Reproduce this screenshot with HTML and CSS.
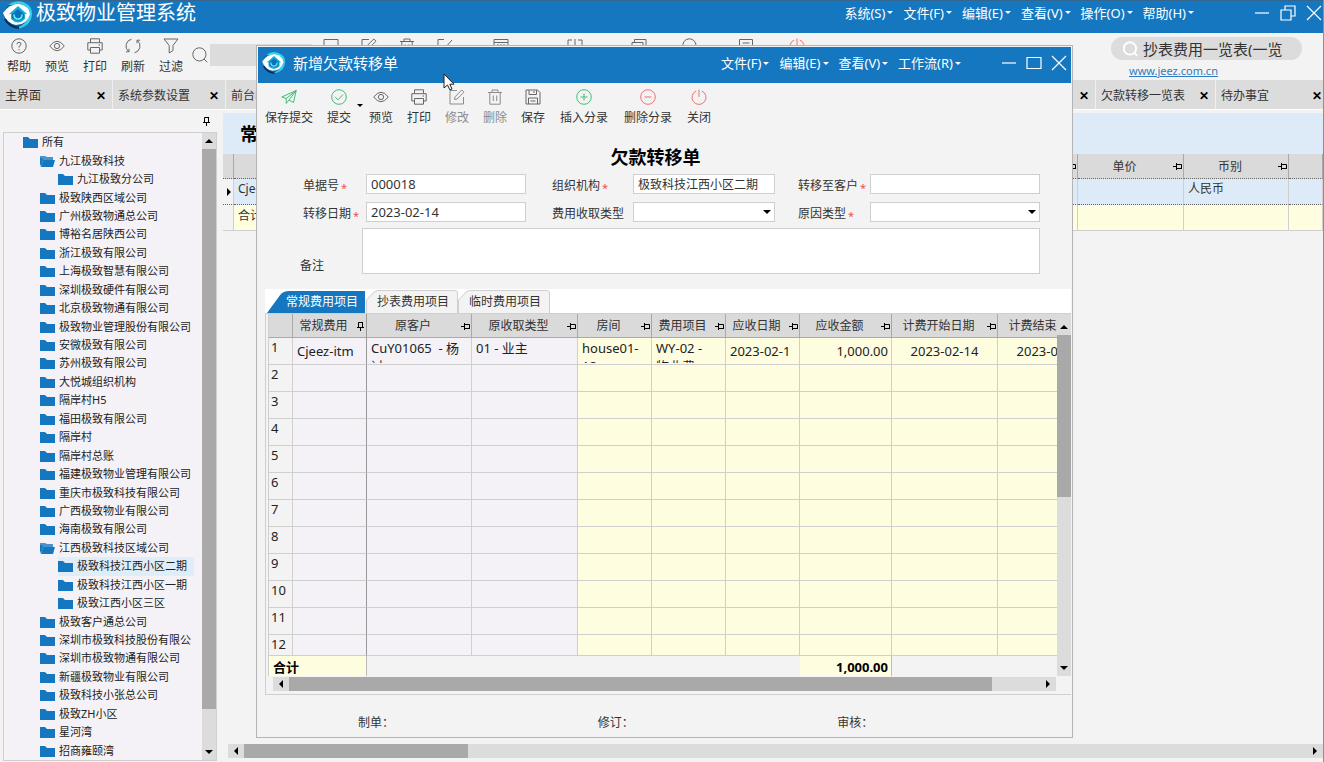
FILE: index.html
```html
<!DOCTYPE html>
<html lang="zh-CN">
<head>
    <meta charset="UTF-8">
    <meta name="viewport" content="width=device-width, initial-scale=1.0">
    <title>极致物业管理系统</title>
    <link rel="stylesheet" href="styles.css">
</head>
<body>
    <!-- Icon set -->
    <svg class="icon-defs" aria-hidden="true">
        <symbol id="logo" viewBox="0 0 30 28">
            <ellipse cx="15" cy="14" rx="14" ry="13" fill="#0b5da6"/>
            <path d="M5 4 A14 12 0 0 1 29 14 A14 14 0 0 1 13 27 Q25 23 26 13 Q20 2 5 4Z" fill="#35cdea"/>
            <path d="M0 12 Q6 3 16 3 Q26 5 27 13 Q24 24 13 24 Q3 22 0 12Z" fill="#fff"/>
            <path d="M6 13 L15 5 L24 13 H22 V18 Q15 25 8 18 V13Z" fill="#18acdc"/>
            <path d="M9 13 L15 8 L21 13 V17 Q15 22 9 17Z" fill="#0a74b8"/>
            <path d="M11 13.500 Q11 18 15 18 Q19 18 19 13.500" fill="none" stroke="#6ff2f5" stroke-width="1.500"/>
            <path d="M2 18 Q6 26 16 27" fill="none" stroke="#062f5e" stroke-width="2"/>
        </symbol>
        <symbol id="help" viewBox="0 0 16 16">
            <circle cx="8" cy="8" r="7.2"/>
            <path d="M6 6.3 Q6 4.3 8 4.3 Q10 4.3 10 6.2 Q10 7.3 8 8.4 V9.6 M8 11 V12.2"/>
        </symbol>
        <symbol id="eye" viewBox="0 0 16 16">
            <path d="M.7 8 Q8 -1.5 15.3 8 Q8 17.5 .7 8Z"/>
            <circle cx="8" cy="8" r="2.6"/>
        </symbol>
        <symbol id="print" viewBox="0 0 16 16">
            <path d="M3.5 4.5 V.8 H12.5 V4.5 M3.5 12 H.8 V4.7 H15.2 V12 H12.5 M3.5 9.5 H12.5 V15.2 H3.5Z M11.5 7 H13"/>
        </symbol>
        <symbol id="refresh" viewBox="0 0 16 16">
            <path d="M6.5 1.2 A7 7 0 0 0 3.5 13.4 M1 13.8 H4 V10.8 M9.5 14.8 A7 7 0 0 0 12.5 2.6 M15 2.2 H12 V5.2"/>
        </symbol>
        <symbol id="filter" viewBox="0 0 16 16">
            <path d="M1 1 H15 L10 7.5 V12.5 L6.2 15 V7.5Z"/>
        </symbol>
        <symbol id="search" viewBox="0 0 16 16">
            <circle cx="7.4" cy="7.4" r="6.6"/>
            <path d="M12 12 L15.3 15.3"/>
        </symbol>
        <symbol id="doc" viewBox="0 0 16 16">
            <path d="M1 15 V1.5 H15 V15Z"/>
        </symbol>
        <symbol id="edit" viewBox="0 0 16 16">
            <path d="M8 1.5 H1 V15 H14.5 V8 M5.5 10.5 L6 7.8 L12.8 1 L15 3.2 L8.2 10Z"/>
        </symbol>
        <symbol id="trash" viewBox="0 0 16 16">
            <path d="M1 3.5 H15 M5 3.5 V1 H11 V3.5 M2.8 3.5 V15.2 H13.2 V3.5 M6.3 6.5 V12 M9.7 6.5 V12"/>
        </symbol>
        <symbol id="check-doc" viewBox="0 0 16 16">
            <path d="M7 1.5 H1 V15 H14 V9 M5 7 L8 10 L15 2"/>
        </symbol>
        <symbol id="calendar" viewBox="0 0 16 16">
            <path d="M1 15 V1.5 H15 V15Z M1 4.5 H15 M4 7 H6 M7 7 H9 M10 7 H12"/>
        </symbol>
        <symbol id="download" viewBox="0 0 16 16">
            <path d="M5 2 H1 V15 H15 V2 H11 M8 1 V10 M5 7 L8 10 L11 7"/>
        </symbol>
        <symbol id="copy" viewBox="0 0 16 16">
            <path d="M1 4.5 H12 V15 H1Z M3.5 4.5 V1.5 H15 V12 H12"/>
        </symbol>
        <symbol id="list" viewBox="0 0 16 16">
            <path d="M1.5 1.5 H14.5 V15 H1.5Z M4.5 5 H11.5 M4.5 8.5 H11.5"/>
        </symbol>
        <symbol id="power" viewBox="0 0 16 16">
            <path d="M5.2 2 A7 7 0 1 0 10.8 2 M8 .5 V8"/>
        </symbol>
        <symbol id="send" viewBox="0 0 16 16">
            <path d="M.8 8 L15.2 1.5 L12.5 13.5 L8 11 L5.2 14.5 V9.5Z M5.2 9.5 L15.2 1.5 L8 11"/>
        </symbol>
        <symbol id="ok" viewBox="0 0 16 16">
            <circle cx="8" cy="8" r="7.3"/>
            <path d="M4.2 8 L7 10.8 L12 5.6"/>
        </symbol>
        <symbol id="save" viewBox="0 0 16 16">
            <path d="M1 1 H12.5 L15 3.5 V15 H1Z M4 1 V5.5 H11.5 V1 M9 2 V4 M3.5 15 V9 H12.5 V15 M5.5 12 H10.5"/>
        </symbol>
        <symbol id="plus" viewBox="0 0 16 16">
            <circle cx="8" cy="8" r="7.3"/>
            <path d="M4.5 8 H11.5 M8 4.5 V11.5"/>
        </symbol>
        <symbol id="minus" viewBox="0 0 16 16">
            <circle cx="8" cy="8" r="7.3"/>
            <path d="M4.5 8 H11.5"/>
        </symbol>
        <symbol id="win-min" viewBox="0 0 16 16"><path d="M1 8 H15"/></symbol>
        <symbol id="win-max" viewBox="0 0 16 16"><path d="M1 2.5 H15 V13.5 H1Z"/></symbol>
        <symbol id="win-restore" viewBox="0 0 16 16"><path d="M1 5 H11 V15 H1Z M5 5 V1 H15 V11 H11"/></symbol>
        <symbol id="win-close" viewBox="0 0 16 16"><path d="M1 1 L15 15 M15 1 L1 15"/></symbol>
        <symbol id="pin" viewBox="0 0 9 9">
            <path d="M0 4.500 H3.500 M3.500 1 V8 M3.500 2.500 H8.500 V6.500 M3.500 6.500 H9"/>
        </symbol>
        <symbol id="pin-down" viewBox="0 0 9 9">
            <path d="M2.500 5.500 V.500 H6.500 M6.500 0 V5.500 M1 5.500 H8 M4.500 5.500 V9"/>
        </symbol>
        <symbol id="folder" viewBox="0 0 15 12">
            <path d="M0 1 H5 L7 3 H15 V12 H0Z" fill="#1577c0"/>
        </symbol>
        <symbol id="folder-open" viewBox="0 0 15 12">
            <path d="M0 1 H5 L7 2 H13 V5 H0Z" fill="#4a93cb"/>
            <path d="M3 5 H15 L13 12 H1Z" fill="#1577c0"/>
            <path d="M0 3 H2 L3 5 L1 12 L0 9Z" fill="#1577c0"/>
        </symbol>
    </svg>

    <header class="titlebar">
        <svg class="logo"><use href="#logo"/></svg>
        <h1>极致物业管理系统</h1>
        <nav class="menu">
            <button>系统(S)</button>
            <button>文件(F)</button>
            <button>编辑(E)</button>
            <button>查看(V)</button>
            <button>操作(O)</button>
            <button>帮助(H)</button>
        </nav>
        <div class="win-buttons">
            <button aria-label="最小化"><svg><use href="#win-min"/></svg></button>
            <button aria-label="还原"><svg><use href="#win-restore"/></svg></button>
            <button aria-label="关闭"><svg><use href="#win-close"/></svg></button>
        </div>
    </header>

    <div class="toolbar">
        <button class="tool"><svg><use href="#help"/></svg>帮助</button>
        <button class="tool"><svg><use href="#eye"/></svg>预览</button>
        <button class="tool"><svg><use href="#print"/></svg>打印</button>
        <button class="tool"><svg><use href="#refresh"/></svg>刷新</button>
        <button class="tool"><svg><use href="#filter"/></svg>过滤</button>
        <label class="quick-search">
            <svg><use href="#search"/></svg>
            <input type="text" aria-label="搜索">
        </label>
        <button class="tool" aria-label="新增"><svg><use href="#doc"/></svg></button>
        <button class="tool" aria-label="修改"><svg><use href="#edit"/></svg></button>
        <button class="tool" aria-label="删除"><svg><use href="#trash"/></svg></button>
        <button class="tool" aria-label="审核"><svg><use href="#check-doc"/></svg></button>
        <span class="space"></span>
        <button class="tool wide" aria-label="日期"><svg><use href="#calendar"/></svg></button>
        <span class="space"></span>
        <span class="space"></span>
        <button class="tool wide" aria-label="导出"><svg><use href="#download"/></svg></button>
        <button class="tool wide" aria-label="复制"><svg><use href="#copy"/></svg></button>
        <button class="tool" aria-label="查询"><svg><use href="#search"/></svg></button>
        <span class="space"></span>
        <button class="tool wide" aria-label="列表"><svg><use href="#list"/></svg></button>
        <button class="tool red" aria-label="关闭"><svg><use href="#power"/></svg></button>
        <div class="site">
            <label class="pill">
                <svg><use href="#search"/></svg>
                <input type="text" aria-label="功能搜索" value="抄表费用一览表(一览">
            </label>
            <a href="#">www.jeez.com.cn</a>
        </div>
    </div>

    <div class="page-tabs">
        <div class="page-tab"><span>主界面</span><button aria-label="关闭">✕</button></div>
        <div class="page-tab"><span>系统参数设置</span><button aria-label="关闭">✕</button></div>
        <div class="page-tab grow"><span>前台收费</span><button aria-label="关闭">✕</button></div>
        <div class="page-tab mid"><span>欠款转移一览表</span><button aria-label="关闭">✕</button></div>
        <div class="page-tab last"><span>待办事宜</span><button aria-label="关闭">✕</button></div>
    </div>

    <main class="workspace">
        <aside class="tree-pane">
            <div class="tree-head"><svg class="pin"><use href="#pin-down"/></svg></div>
            <div class="tree-box">
                <ul class="tree" id="tree"></ul>
                <div class="vscroll">
                    <i class="up"></i>
                    <div class="thumb tree-thumb"></div>
                    <div class="rest tree-rest"></div>
                    <i class="down"></i>
                </div>
            </div>
        </aside>

        <section class="list-pane">
            <h2>常规</h2>
            <table class="list">
                <colgroup>
                    <col class="c-mark"><col><col class="c-106"><col class="c-105"><col class="c-34">
                </colgroup>
                <thead>
                    <tr>
                        <th></th>
                        <th><div class="head"><span></span><svg class="pin"><use href="#pin"/></svg></div></th>
                        <th><div class="head"><span>单价</span><svg class="pin"><use href="#pin"/></svg></div></th>
                        <th><div class="head"><span>币别</span><svg class="pin"><use href="#pin"/></svg></div></th>
                        <th></th>
                    </tr>
                </thead>
                <tbody>
                    <tr class="current"><td class="mark"><i></i></td><td>Cjeez-itm</td><td></td><td>人民币</td><td></td></tr>
                    <tr class="sum"><td class="mark"></td><td>合计</td><td></td><td></td><td></td></tr>
                </tbody>
            </table>
            <div class="hscroll page-scroll">
                <i class="left"></i>
                <div class="thumb list-thumb"></div>
                <div class="rest list-rest"></div>
                <i class="right"></i>
            </div>
        </section>
    </main>

    <!-- Transfer order window -->
    <div class="dialog" role="dialog" aria-labelledby="dialog-title">
        <header class="dialog-bar">
            <svg class="logo"><use href="#logo"/></svg>
            <h2 id="dialog-title">新增欠款转移单</h2>
            <nav class="menu">
                <button>文件(F)</button>
                <button>编辑(E)</button>
                <button>查看(V)</button>
                <button>工作流(R)</button>
            </nav>
            <div class="win-buttons">
                <button aria-label="最小化"><svg><use href="#win-min"/></svg></button>
                <button aria-label="最大化"><svg><use href="#win-max"/></svg></button>
                <button aria-label="关闭"><svg><use href="#win-close"/></svg></button>
            </div>
        </header>

        <div class="dialog-tools">
            <button class="tool wide green"><svg><use href="#send"/></svg>保存提交</button>
            <button class="tool green"><svg><use href="#ok"/></svg>提交</button>
            <i class="drop"></i>
            <button class="tool"><svg><use href="#eye"/></svg>预览</button>
            <button class="tool"><svg><use href="#print"/></svg>打印</button>
            <button class="tool" disabled><svg><use href="#edit"/></svg>修改</button>
            <button class="tool" disabled><svg><use href="#trash"/></svg>删除</button>
            <button class="tool"><svg><use href="#save"/></svg>保存</button>
            <button class="tool wide green"><svg><use href="#plus"/></svg>插入分录</button>
            <button class="tool wide red"><svg><use href="#minus"/></svg>删除分录</button>
            <button class="tool red"><svg><use href="#power"/></svg>关闭</button>
        </div>

        <h3 class="form-title">欠款转移单</h3>

        <form class="form">
            <label for="bill-no">单据号<b>*</b></label>
            <input type="text" id="bill-no" value="000018">
            <label for="org">组织机构<b>*</b></label>
            <input type="text" id="org" class="cn" value="极致科技江西小区二期">
            <label for="customer">转移至客户<b>*</b></label>
            <input type="text" id="customer">

            <label for="bill-date">转移日期<b>*</b></label>
            <input type="text" id="bill-date" value="2023-02-14">
            <label for="fee-type">费用收取类型</label>
            <span class="select"><select id="fee-type"><option></option></select></span>
            <label for="reason">原因类型<b>*</b></label>
            <span class="select"><select id="reason"><option></option></select></span>
        </form>
        <div class="remark">
            <label for="remark">备注</label>
            <textarea id="remark"></textarea>
        </div>

        <div class="items">
            <div class="item-tabs">
                <button class="item-tab active"><svg viewBox="0 0 97 23" preserveAspectRatio="none"><path d="M0 23 L13 5 Q16 1 22 1 H97 V23Z"/></svg><span>常规费用项目</span></button>
                <button class="item-tab"><svg viewBox="0 0 92 23" preserveAspectRatio="none"><path d="M.5 23 V10 L8 2 Q10 .5 13 .5 H89 Q91.500 .5 91.500 3 V23"/></svg><span>抄表费用项目</span></button>
                <button class="item-tab"><svg viewBox="0 0 92 23" preserveAspectRatio="none"><path d="M.5 23 V10 L8 2 Q10 .5 13 .5 H89 Q91.500 .5 91.500 3 V23"/></svg><span>临时费用项目</span></button>
            </div>
            <div class="grid-frame">
                <div class="grid-area">
                    <div class="grid-scroll">
                        <table class="grid">
                            <colgroup>
                                <col class="c-24"><col class="c-74"><col class="c-105"><col class="c-106"><col class="c-74"><col class="c-74"><col class="c-74"><col class="c-92"><col class="c-106"><col class="c-106">
                            </colgroup>
                            <thead>
                                <tr id="grid-head"><th></th></tr>
                            </thead>
                            <tbody id="grid-body">
                                <tr>
                                    <td class="num">1</td>
                                    <td>Cjeez-itm</td>
                                    <td><div class="wrap">CuY01065&nbsp; - 杨<br>过</div></td>
                                    <td><div class="wrap">01 - 业主</div></td>
                                    <td><div class="wrap">house01-<br>12</div></td>
                                    <td><div class="wrap">WY-02 -<br>物业费</div></td>
                                    <td>2023-02-1</td>
                                    <td class="money">1,000.00</td>
                                    <td class="center">2023-02-14</td>
                                    <td class="center">2023-02-28</td>
                                </tr>
                            </tbody>
                            <tfoot>
                                <tr>
                                    <td class="total" colspan="2">合计</td>
                                    <td class="blank" colspan="5"></td>
                                    <td class="total money">1,000.00</td>
                                    <td class="blank" colspan="2"></td>
                                </tr>
                            </tfoot>
                        </table>
                    </div>
                    <div class="vscroll grid-vscroll">
                        <i class="up"></i>
                        <div class="thumb grid-thumb"></div>
                        <div class="rest grid-rest"></div>
                        <i class="down"></i>
                    </div>
                </div>
                <div class="hscroll grid-hscroll">
                    <i class="left"></i>
                    <div class="thumb row-thumb"></div>
                    <div class="rest row-rest"></div>
                    <i class="right"></i>
                </div>
            </div>
        </div>

        <footer class="signs">
            <span>制单：</span>
            <span>修订：</span>
            <span>审核：</span>
        </footer>
    </div>

    <svg class="cursor" viewBox="0 0 12 18"><path d="M1 1 V15 L4.500 12 L7 17 L9 16 L6.800 11.200 H11Z"/></svg>

    <script>
        // level, name, open folder, selected
        const treeData = [
            [0, "所有"], [1, "九江极致科技", true], [2, "九江极致分公司"],
            [1, "极致陕西区域公司"], [1, "广州极致物通总公司"], [1, "博裕名居陕西公司"],
            [1, "浙江极致有限公司"], [1, "上海极致智慧有限公司"], [1, "深圳极致硬件有限公司"],
            [1, "北京极致物通有限公司"], [1, "极致物业管理股份有限公司"], [1, "安微极致有限公司"],
            [1, "苏州极致有限公司"], [1, "大悦城组织机构"], [1, "隔岸村H5"],
            [1, "福田极致有限公司"], [1, "隔岸村"], [1, "隔岸村总账"],
            [1, "福建极致物业管理有限公司"], [1, "重庆市极致科技有限公司"], [1, "广西极致物业有限公司"],
            [1, "海南极致有限公司"], [1, "江西极致科技区域公司", true], [2, "极致科技江西小区二期", false, true],
            [2, "极致科技江西小区一期"], [2, "极致江西小区三区"], [1, "极致客户通总公司"],
            [1, "深圳市极致科技股份有限公"], [1, "深圳市极致物通有限公司"], [1, "新疆极致物业有限公司"],
            [1, "极致科技小张总公司"], [1, "极致ZH小区"], [1, "星河湾"], [1, "招商雍颐湾"]
        ];
        document.getElementById('tree').innerHTML = treeData.map(([level, name, open, selected]) =>
            `<li class="level-${level}"><a href="#" class="${selected ? 'selected' : ''}"><svg><use href="#${open ? 'folder-open' : 'folder'}"/></svg>${name}</a></li>`
        ).join('');

        const heads = ["常规费用", "原客户", "原收取类型", "房间", "费用项目", "应收日期", "应收金额", "计费开始日期", "计费结束日期"];
        document.getElementById('grid-head').innerHTML += heads.map((name, i) =>
            `<th><div class="head"><span>${name}</span><svg class="pin"><use href="#${i ? 'pin' : 'pin-down'}"/></svg></div></th>`
        ).join('');

        // Empty rows
        let rows = '';
        for (let i = 2; i <= 12; i++) {
            rows += `<tr><td class="num">${i}</td>${'<td></td>'.repeat(9)}</tr>`;
        }
        document.getElementById('grid-body').innerHTML += rows;
    </script>
</body>
</html>
```
FILE: styles.css
```css
/* General styles */
* {
    box-sizing: border-box;
}

body {
    margin: 0;
    height: 100vh;
    overflow: hidden;
    display: flex;
    flex-direction: column;
    border-right: 1px solid #8f8f8f;
    background: #f3f3f3;
    color: #333;
    font-family: "Noto Sans", "Noto Sans CJK SC", sans-serif;
    font-size: 12px;
    line-height: 16px;
}

h1, h2, h3, ul {
    margin: 0;
    padding: 0;
    font-weight: normal;
}

button, input, select, textarea {
    font: inherit;
    color: inherit;
    margin: 0;
    padding: 0;
    border: none;
    border-radius: 0;
    background: none;
}

svg {
    display: block;
    flex: none;
    width: 16px;
    height: 16px;
    fill: none;
    stroke: currentColor;
    stroke-width: 1;
}

.icon-defs {
    position: absolute;
    width: 0;
    height: 0;
}

.logo {
    stroke: none;
}

/* Title bars */
.titlebar {
    flex: none;
    display: flex;
    align-items: center;
    height: 33px;
    padding: 0 1px 9px 3px;
    border-top: 1px solid #33678f;
    background: #1577c0;
    color: #fff;
}

.titlebar .logo {
    width: 30px;
    height: 28px;
    margin-top: 4px;
}

.titlebar h1 {
    flex: 1;
    margin-left: 3px;
    font-size: 20px;
    line-height: 24px;
}

.menu {
    display: flex;
    gap: 10px;
    font-size: 13px;
}

.menu button {
    display: flex;
    align-items: center;
    white-space: nowrap;
}

.menu button::after {
    content: "";
    margin-left: 2px;
    border: 3px solid transparent;
    border-top-color: #fff;
    border-bottom: none;
}

.win-buttons {
    display: flex;
    gap: 10px;
    margin-left: 60px;
}

.win-buttons svg {
    stroke-width: 1.2;
}

/* Tool buttons */
.toolbar {
    flex: none;
    display: flex;
    height: 47px;
    padding-top: 5px;
}

.tool {
    flex: none;
    width: 38px;
    display: flex;
    flex-direction: column;
    align-items: center;
    gap: 5px;
    white-space: nowrap;
}

.tool svg {
    color: #666;
}

.tool.wide {
    width: 64px;
}

.tool.green svg {
    color: #3fbf77;
}

.tool.red svg {
    color: #f0716f;
}

.tool:disabled,
.tool:disabled svg {
    color: #8c8c8c;
}

.space {
    flex: none;
    width: 5px;
}

.quick-search {
    flex: none;
    width: 122px;
    height: 22px;
    margin-top: 6px;
    display: flex;
    align-items: center;
    gap: 2px;
    padding-left: 2px;
    color: #666;
}

.quick-search input {
    flex: 1;
    min-width: 0;
    height: 22px;
    background: #dcdcdc;
}

.site {
    width: 191px;
    margin: -1px 21px 0 auto;
}

.pill {
    display: flex;
    align-items: center;
    gap: 5px;
    height: 23px;
    padding-left: 12px;
    border-radius: 12px;
    background: #dcdcdc;
    font-size: 15px;
}

.pill svg {
    width: 15px;
    color: #fff;
    stroke-width: 2;
}

.pill input {
    flex: 1;
    min-width: 0;
}

.site a {
    display: block;
    margin: 3px 0 0 18px;
    color: #2f7cc2;
    font-size: 11px;
}

/* Page tabs */
.page-tabs {
    flex: none;
    display: flex;
    gap: 1px;
    height: 29px;
    background: #efefef;
}

.page-tab {
    flex: none;
    width: 112px;
    display: flex;
    align-items: center;
    justify-content: space-between;
    padding: 2px 6px 0 5px;
    background: #dcdcdc;
    white-space: nowrap;
}

.page-tab button {
    color: #000;
    font-size: 12px;
    font-weight: bold;
}

.page-tab.grow {
    flex: 1;
}

.page-tab.mid {
    width: 119px;
}

.page-tab.last {
    width: 107px;
    padding-right: 1px;
}

/* Scroll bars */
.vscroll, .hscroll {
    flex: none;
    display: flex;
    background: #dcdcdc;
}

.vscroll {
    flex-direction: column;
    width: 14px;
}

.hscroll {
    height: 14px;
}

.vscroll i, .hscroll i {
    flex: none;
    display: flex;
    align-items: center;
    justify-content: center;
    width: 16px;
    height: 16px;
}

.vscroll i {
    width: 14px;
}

.hscroll i {
    height: 14px;
}

.vscroll i::before, .hscroll i::before {
    content: "";
    border: 4px solid transparent;
}

.vscroll .up::before {
    border-bottom-color: #000;
    border-top: none;
}

.vscroll .down::before {
    border-top-color: #000;
    border-bottom: none;
}

.hscroll .left::before {
    border-right-color: #000;
    border-left: none;
}

.hscroll .right::before {
    border-left-color: #000;
    border-right: none;
}

.thumb {
    background: #a9a9a9;
}

.tree-thumb { flex: 559; }
.tree-rest { flex: 35; }
.list-thumb { flex: 223; }
.list-rest { flex: 837; }
.grid-thumb { flex: 162; }
.grid-rest { flex: 164; }
.row-thumb { flex: 703; }
.row-rest { flex: 48; }

/* Tree */
.workspace {
    flex: 1;
    min-height: 0;
    display: flex;
    padding-top: 3px;
    border-top: 1px solid #fff;
}

.tree-pane {
    flex: none;
    width: 223px;
    padding: 0 6px 1px 3px;
    display: flex;
    flex-direction: column;
}

.tree-head {
    height: 19px;
    display: flex;
    justify-content: flex-end;
    padding: 4px 6px 0 0;
}

.pin {
    width: 9px;
    height: 9px;
    color: #000;
}

.tree-box {
    flex: 1;
    min-height: 0;
    display: flex;
    border: 1px solid #cfcfcf;
    background: #f4f2f7;
}

.tree {
    flex: 1;
    display: flex;
    flex-direction: column;
    list-style: none;
    font-size: 11px;
}

.tree li {
    flex: 1;
    min-height: 0;
    display: flex;
}

.tree a {
    display: flex;
    align-items: center;
    gap: 4px;
    padding: 0 7px 0 0;
    color: #222;
    text-decoration: none;
    white-space: nowrap;
}

.tree a.selected {
    background: #deedf8;
}

.tree svg {
    width: 15px;
    height: 12px;
    stroke: none;
}

.level-0 { padding-left: 19px; }
.level-1 { padding-left: 36px; }
.level-2 { padding-left: 54px; }

/* Background list */
.list-pane {
    flex: 1;
    min-width: 0;
    display: flex;
    flex-direction: column;
}

.list-pane h2 {
    height: 41px;
    padding: 8px 0 0 17px;
    background: #dcebf7;
    color: #000;
    font-size: 18px;
    font-weight: bold;
    line-height: 26px;
}

table {
    border-collapse: separate;
    border-spacing: 0;
    table-layout: fixed;
}

th, td {
    padding: 0 4px;
    border-right: 1px solid #cfcfcf;
    border-bottom: 1px solid #cfcfcf;
    font-weight: normal;
    text-align: left;
}

th {
    height: 25px;
    padding: 1px 1px 0 0;
    background: #dadada;
    border-color: #a9a9a9;
}

.head {
    display: flex;
    align-items: center;
    gap: 2px;
    white-space: nowrap;
}

.head span {
    flex: 1;
    text-align: center;
}

.list {
    width: 100%;
}

.list th {
    border-bottom: 1px dotted #666;
}

.list td {
    height: 26px;
}

.list .current td {
    background: #dcebf7;
    border-bottom: 1px dotted #666;
    line-height: 18px;
    padding-bottom: 6px;
}

.list .sum td {
    background: #fffde0;
    padding-bottom: 3px;
}

.list tr .mark {
    background: #f3f3f3;
    padding: 0;
}

.mark i {
    display: block;
    width: 0;
    margin-left: 4px;
    border: 4px solid transparent;
    border-left-color: #000;
    border-right: none;
}

.page-scroll {
    margin: auto 0 4px 5px;
}

.c-mark { width: 11px; }
.c-24 { width: 24px; }
.c-34 { width: 34px; }
.c-74 { width: 74px; }
.c-92 { width: 92px; }
.c-105 { width: 105px; }
.c-106 { width: 106px; }

/* Dialog window */
.dialog {
    position: fixed;
    top: 45px;
    right: 251px;
    bottom: 24px;
    left: 256px;
    display: flex;
    flex-direction: column;
    padding: 1px;
    border: 1px solid #b4b4b4;
    background: #f3f3f3;
}

.dialog-bar {
    flex: none;
    display: flex;
    align-items: center;
    height: 36px;
    padding: 0 4px 4px;
    background: #1577c0;
    color: #fff;
}

.dialog-bar .logo {
    width: 24px;
    height: 22px;
}

.dialog-bar h2 {
    flex: 1;
    margin-left: 7px;
    font-size: 15px;
    line-height: 20px;
}

.dialog-bar .win-buttons {
    margin-left: 40px;
    gap: 9px;
}

.dialog-tools {
    flex: none;
    display: flex;
    height: 48px;
    padding-top: 6px;
}

.dialog-tools .wide:first-child {
    width: 62px;
}

.drop {
    width: 6px;
    height: 3px;
    margin: 15px -1px 0 -1px;
    border: 3px solid transparent;
    border-top-color: #000;
    border-bottom: none;
}

.form-title {
    flex: none;
    height: 43px;
    padding-top: 14px;
    padding-right: 18px;
    color: #000;
    font-size: 18px;
    font-weight: bold;
    line-height: 24px;
    text-align: center;
}

.form {
    flex: none;
    display: grid;
    grid-template-columns: 63px 160fr 107px 142fr 95px 170fr;
    grid-auto-rows: 20px;
    row-gap: 8px;
    padding: 0 31px 0 45px;
}

.form label {
    padding-top: 4px;
    white-space: nowrap;
}

.form label b {
    margin-left: 2px;
    color: #f0504c;
    font-weight: normal;
    font-size: 11px;
    line-height: 12px;
    vertical-align: -2px;
}

.form label:nth-of-type(3n + 2) {
    padding-left: 26px;
}

.form label:nth-of-type(3n) {
    padding-left: 23px;
}

.form input, .form select, .remark textarea {
    width: 100%;
    min-width: 0;
    height: 20px;
    border: 1px solid #cfcfcf;
    background: #fff;
}

.form input {
    padding: 0 4px;
    font-size: 13px;
}

.form .cn {
    font-size: 12px;
}

.select {
    position: relative;
}

.select select {
    display: block;
    appearance: none;
}

.select::after {
    content: "";
    position: absolute;
    top: 8px;
    right: 4px;
    border: 4px solid transparent;
    border-top-color: #000;
    border-bottom: none;
    pointer-events: none;
}

.remark {
    flex: none;
    display: flex;
    align-items: flex-end;
    margin: 6px 31px 15px 42px;
}

.remark label {
    width: 62px;
}

.remark textarea {
    flex: 1;
    height: 46px;
    resize: none;
}

/* Item grid */
.items {
    flex: 1;
    min-height: 0;
    display: flex;
    flex-direction: column;
    margin-left: 7px;
}

.item-tabs {
    flex: none;
    display: flex;
    height: 24px;
    padding: 1px 0 0 2px;
    background: #fff;
}

.item-tab {
    position: relative;
    width: 92px;
    height: 23px;
    padding-left: 2px;
}

.item-tab.active {
    width: 98px;
    margin-right: 1px;
    padding-left: 12px;
    color: #fff;
}

.item-tab svg {
    position: absolute;
    top: 0;
    left: 0;
    width: 100%;
    height: 100%;
    fill: #f3f3f3;
    stroke: #cfcfcf;
}

.item-tab.active svg {
    fill: #1577c0;
    stroke: none;
}

.item-tab span {
    position: relative;
}

.grid-frame {
    flex: 1;
    min-height: 0;
    display: flex;
    flex-direction: column;
    padding: 0 0 3px 2px;
    border: 1px solid #cfcfcf;
    border-right: none;
}

.grid-area {
    flex: 1;
    min-height: 0;
    display: flex;
}

.grid-scroll {
    flex: 1;
    min-width: 0;
    overflow: hidden;
    border-left: 1px solid #cfcfcf;
}

.grid {
    width: 835px;
}

.grid th {
    height: 24px;
}

.grid td {
    height: 27px;
    background: #fffde0;
    color: #222;
    font-size: 13px;
    white-space: nowrap;
}

.grid td:nth-child(2),
.grid td:nth-child(3),
.grid td:nth-child(4) {
    background: #f4f2f7;
}

.grid td:nth-child(2),
.grid th:nth-child(2) {
    border-right-color: #999;
}

.grid .num {
    padding: 0 2px 8px;
    background: #f3f3f3;
}

.grid tbody tr:last-child td {
    height: 21px;
    padding-bottom: 2px;
}

.grid tfoot tr td {
    height: 22px;
    border-right: none;
}

.grid tfoot tr .blank {
    background: #f3f3f3;
}

.grid tfoot tr .total {
    background: #fffde0;
    color: #000;
    font-weight: bold;
    border-right: 1px solid #bbb;
}

.wrap {
    height: 24px;
    overflow: hidden;
    line-height: 18px;
}

.grid .money {
    padding-right: 3px;
    text-align: right;
}

.center {
    text-align: center;
}

.grid-vscroll {
    padding-top: 5px;
}

.grid-hscroll {
    margin: 1px 15px 0 5px;
}

.signs {
    flex: none;
    display: grid;
    grid-template-columns: repeat(3, 1fr);
    gap: 6px;
    height: 41px;
    padding: 20px 0 0 100px;
}

/* Mouse pointer */
.cursor {
    position: fixed;
    top: 73px;
    left: 443px;
    width: 12px;
    height: 18px;
    fill: #fff;
    stroke: #222;
}
```
